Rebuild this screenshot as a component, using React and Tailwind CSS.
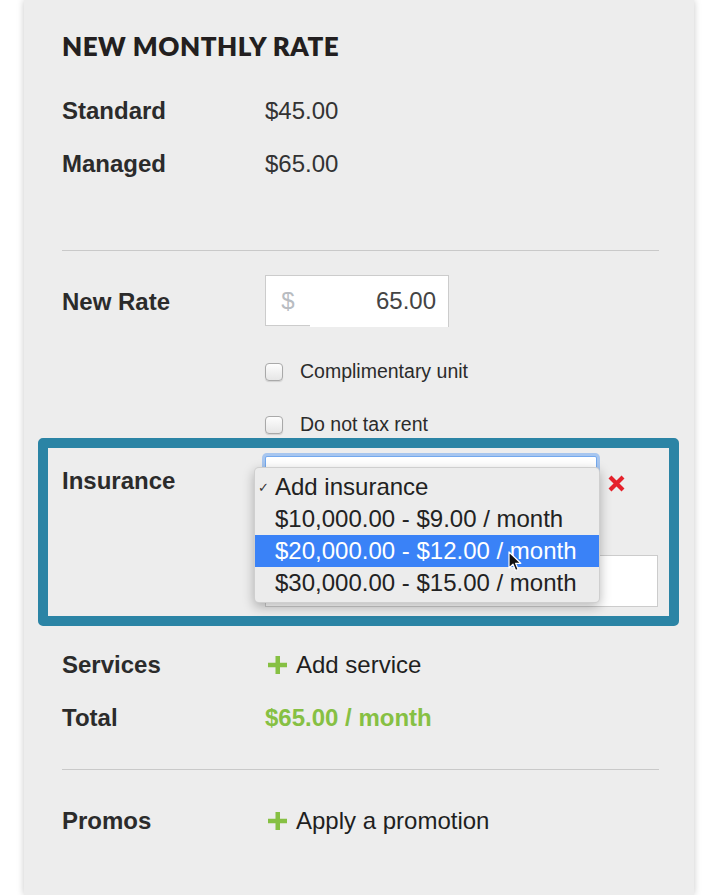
import React from "react";

function Plus() {
  return (
    <svg width="19" height="18" viewBox="0 0 19 18" className="shrink-0">
      <rect x="7.5" y="0" width="4.5" height="18" fill="#86c043" />
      <rect x="0" y="6.75" width="19" height="4.5" fill="#86c043" />
    </svg>
  );
}

function Checkbox() {
  return (
    <div className="w-[18px] h-[18px] rounded-[4px] border border-[#a9a9a9] bg-gradient-to-b from-[#fdfdfd] to-[#e6e6e6] shadow-[0_1px_1px_rgba(0,0,0,0.12)] shrink-0" />
  );
}

function Cursor() {
  return (
    <svg width="14" height="22" viewBox="0 0 14 22" className="absolute left-[508px] top-[551px]">
      <path d="M1 1 L1 17 L5 13.2 L7.6 19.5 L10.2 18.4 L7.6 12.3 L12.8 12.3 Z" fill="#111" stroke="#fff" strokeWidth="1.2" strokeLinejoin="round" />
    </svg>
  );
}

function RedX() {
  return (
    <svg width="17" height="17" viewBox="0 0 17 17" className="ml-[11px] mt-[5px]">
      <path d="M2 2 L15 15 M15 2 L2 15" stroke="#e5212b" strokeWidth="4.2" strokeLinecap="butt" />
    </svg>
  );
}

export default function App() {
  const sans = { fontFamily: '"Liberation Sans", Arial, Helvetica, sans-serif' };
  return (
    <div className="bg-white w-[721px] h-[895px] overflow-hidden relative" style={sans}>
      <div className="ml-[24px] w-[670px] h-[895px] bg-[#ededed] shadow-[0_0_7px_rgba(0,0,0,0.22)] pl-[38px] pr-[35px] pt-[30px] text-[#333]">
        <div className="text-[26px] leading-[32px] font-extrabold text-[#231f20] tracking-[0.5px]" style={{ fontFamily: 'Lato, "Liberation Sans", sans-serif' }}>
          NEW MONTHLY RATE
        </div>

        <div className="flex mt-[33px] text-[24px] leading-[32px]">
          <div className="w-[203px] shrink-0 font-bold text-[#2b2b2b]">Standard</div>
          <div>$45.00</div>
        </div>
        <div className="flex mt-[21px] text-[24px] leading-[32px]">
          <div className="w-[203px] shrink-0 font-bold text-[#2b2b2b]">Managed</div>
          <div>$65.00</div>
        </div>

        <div className="mt-[70px] h-px bg-[#c9c9c9]" />

        <div className="flex items-start mt-[24px] text-[24px] leading-[32px]">
          <div className="w-[203px] shrink-0 font-bold text-[#2b2b2b] mt-[11px]">New Rate</div>
          <div className="flex items-start">
            <div className="w-[45px] h-[51px] border border-r-0 border-[#cccccc] bg-white flex items-center justify-center text-[#b8bcc1]">$</div>
            <div className="w-[139px] h-[52px] border-t border-r border-[#cccccc] bg-white flex items-center justify-end pr-[12px] pb-[1px] text-[#444]">65.00</div>
          </div>
        </div>

        <div className="ml-[203px] mt-[31px] h-[28px] flex items-center gap-[17px] text-[19.5px] text-[#2b2b2b]">
          <Checkbox />
          <span>Complimentary unit</span>
        </div>
        <div className="ml-[203px] mt-[25px] h-[28px] flex items-center gap-[17px] text-[19.5px] text-[#2b2b2b]">
          <Checkbox />
          <span>Do not tax rent</span>
        </div>

        <div className="-mt-px -ml-[24px] -mr-[20px] border-[10px] border-[#2b84a5] rounded-[5px] bg-[#ededed] relative">
          <div className="flex items-start pl-[14px] pr-[11px] pt-[8px] pb-[9px] text-[24px] leading-[32px]">
            <div className="w-[203px] shrink-0 font-bold text-[#2b2b2b] mt-[9px]">Insurance</div>
            <div className="flex-1">
              <div className="flex items-center">
                <div className="w-[332px] h-[50px] bg-white border border-[#74a9ee] rounded-[2px] shadow-[0_0_0_3px_rgba(110,165,240,0.55)]" />
                <RedX />
              </div>
              <div className="mt-[49px] h-[52px] border border-[#cccccc] bg-white" />
            </div>
          </div>

          <div className="absolute left-[206px] top-[19px] w-[346px] h-[136px] rounded-[5px] bg-[#ececec] border border-[rgba(0,0,0,0.12)] shadow-[0_4px_12px_rgba(0,0,0,0.28)] py-[3px] text-[24px] leading-[32px] text-[#222]">
            <div className="h-[32px] flex items-center relative pl-[20px]">
              <span className="absolute left-[3px] top-[1px] text-[13px] text-[#333]">✓</span>
              Add insurance
            </div>
            <div className="h-[32px] flex items-center pl-[20px]">$10,000.00 - $9.00 / month</div>
            <div className="h-[32px] flex items-center pl-[20px] bg-[#3a82f7] text-white">$20,000.00 - $12.00 / month</div>
            <div className="h-[32px] flex items-center pl-[20px]">$30,000.00 - $15.00 / month</div>
          </div>
        </div>

        <div className="flex mt-[23px] text-[24px] leading-[32px]">
          <div className="w-[203px] shrink-0 font-bold text-[#2b2b2b]">Services</div>
          <div className="flex items-center text-[#1f1f1f]">
            <span className="ml-[3px] mr-[9px] flex"><Plus /></span>
            Add service
          </div>
        </div>
        <div className="flex mt-[21px] text-[24px] leading-[32px]">
          <div className="w-[203px] shrink-0 font-bold text-[#2b2b2b]">Total</div>
          <div className="font-bold text-[#86c043]">$65.00 / month</div>
        </div>

        <div className="mt-[35px] h-px bg-[#c9c9c9]" />

        <div className="flex mt-[35px] text-[24px] leading-[32px]">
          <div className="w-[203px] shrink-0 font-bold text-[#2b2b2b]">Promos</div>
          <div className="flex items-center text-[#1f1f1f]">
            <span className="ml-[3px] mr-[9px] flex"><Plus /></span>
            Apply a promotion
          </div>
        </div>
      </div>
      <Cursor />
    </div>
  );
}
